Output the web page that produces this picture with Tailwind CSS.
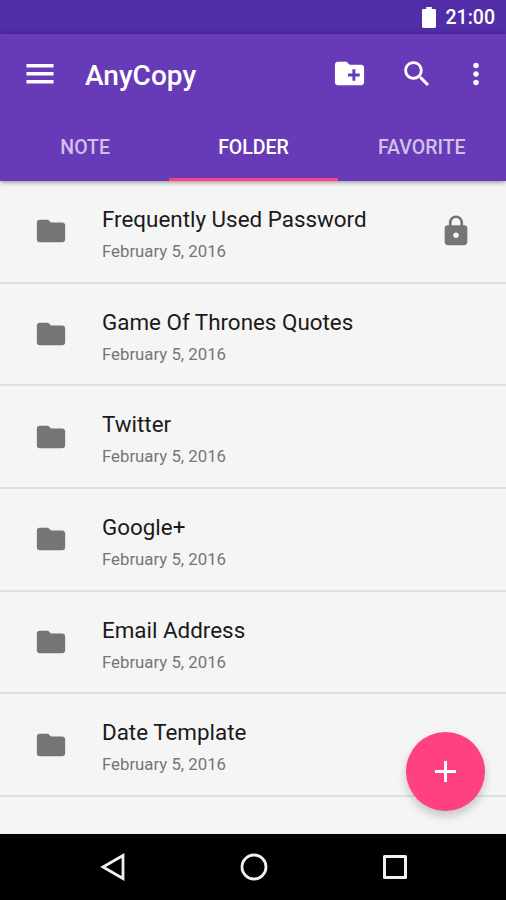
<!DOCTYPE html>
<html lang="en">
<head>
  <meta charset="UTF-8">
  <meta name="viewport" content="width=device-width, initial-scale=1.0">
  <title>AnyCopy</title>
  <script src="https://cdn.jsdelivr.net/npm/@tailwindcss/browser@4"></script>
</head>
<body class="bg-black font-['Roboto',sans-serif]">

  <div class="relative flex flex-col w-[506px] h-[900px] overflow-hidden bg-[#f5f5f5]">

    <!-- Status Bar -->
    <div class="h-[34px] shrink-0 bg-[#512da8] flex items-center justify-end pr-[11px] gap-[10px] text-white">
      <svg class="w-[14px] h-[21px]" viewBox="0 0 15 21" preserveAspectRatio="none" fill="currentColor"><path d="M4.5 0h6v2h3c.8 0 1.500.6 1.500 1.400v16.200c0 .8-.7 1.400-1.500 1.400h-12C.7 21 0 20.400 0 19.600V3.400C0 2.600.7 2 1.500 2h3z"/></svg>
      <span class="text-[19.500px] leading-none font-medium pt-[2px]">21:00</span>
    </div>

    <!-- Header -->
    <header class="relative z-10 h-[147px] shrink-0 bg-[#673ab7] text-white shadow-[0_1px_5px_rgba(0,0,0,0.45)]">
      <div class="flex items-center h-[79px] pl-[26px] pr-[13px]">
        <svg class="w-7 h-5" viewBox="0 0 28 20" fill="currentColor"><path d="M.5 0h27v3.500H.5zM.5 8h27v3.500H.5zM.5 16h27v3.500H.5z"/></svg>
        <h1 class="ml-[31px] mt-[5px] text-[28px] leading-none font-medium">AnyCopy</h1>
        <svg class="ml-auto w-[35px] h-[35px]" viewBox="0 0 24 24" fill="currentColor"><path d="M20 6h-8l-2-2H4c-1.110 0-1.990.89-1.990 2L2 18c0 1.110.89 2 2 2h16c1.110 0 2-.89 2-2V8c0-1.110-.89-2-2-2zm-1 8h-3v3h-2v-3h-3v-2h3V9h2v3h3v2z"/></svg>
        <svg class="ml-[33px] w-[34px] h-[34px]" viewBox="0 0 24 24" fill="currentColor"><path d="M15.500 14h-.79l-.28-.27C15.410 12.590 16 11.110 16 9.500 16 5.910 13.090 3 9.500 3S3 5.910 3 9.500 5.910 16 9.500 16c1.610 0 3.090-.59 4.230-1.570l.27.28v.79l5 4.990L20.490 19l-4.990-5zm-6 0C7.010 14 5 11.990 5 9.500S7.010 5 9.500 5 14 7.010 14 9.500 11.990 14 9.500 14z"/></svg>
        <svg class="ml-[25px] w-[34px] h-[34px]" viewBox="0 0 24 24" fill="currentColor"><path d="M12 8c1.100 0 2-.9 2-2s-.9-2-2-2-2 .9-2 2 .9 2 2 2zm0 2c-1.100 0-2 .9-2 2s.9 2 2 2 2-.9 2-2-.9-2-2-2zm0 6c-1.100 0-2 .9-2 2s.9 2 2 2 2-.9 2-2-.9-2-2-2z"/></svg>
      </div>

      <!-- Tabs -->
      <nav class="grid grid-cols-3 h-[68px] pl-px text-center text-[19.500px] leading-[69px] font-medium">
        <a class="h-[68px] text-white/70">NOTE</a>
        <a class="h-[68px] border-b-3 border-[#ff4081]">FOLDER</a>
        <a class="h-[68px] text-white/70">FAVORITE</a>
      </nav>
    </header>

    <!-- Folder List -->
    <ul id="folders" class="flex-1 min-h-0 overflow-hidden"></ul>

    <!-- Add Button -->
    <button class="absolute z-10 left-[405.500px] top-[731.500px] w-[79px] h-[79px] rounded-full bg-[#ff4081] text-white flex items-center justify-center shadow-[0_5px_10px_rgba(0,0,0,0.2)]">
      <svg class="w-[21px] h-[21px]" viewBox="0 0 21 21" fill="currentColor"><path d="M9 0h3v9h9v3h-9v9H9v-9H0V9h9z"/></svg>
    </button>

    <!-- Navigation Bar -->
    <div class="h-[66px] shrink-0 bg-black flex items-center justify-center gap-[113px] pl-px text-[#f0f0f0]">
      <svg class="w-7 h-7" viewBox="0 0 28 28" fill="none" stroke="currentColor" stroke-width="2.800"><path d="M24 2.500v23L4 14z"/></svg>
      <svg class="w-7 h-7" viewBox="0 0 28 28" fill="none" stroke="currentColor" stroke-width="2.800"><circle cx="14" cy="14" r="12"/></svg>
      <svg class="w-7 h-7" viewBox="0 0 28 28" fill="none" stroke="currentColor" stroke-width="3" stroke-linejoin="round"><path d="M3.500 3.500h21v21h-21z"/></svg>
    </div>
  </div>

  <script>
    const folders = [
      { name: "Frequently Used Password", locked: true },
      { name: "Game Of Thrones Quotes" },
      { name: "Twitter" },
      { name: "Google+" },
      { name: "Email Address" },
      { name: "Date Template" },
    ];

    const folderIcon = '<svg class="w-[34px] h-[34px] shrink-0" viewBox="0 0 24 24" fill="currentColor"><path d="M10 4H4c-1.100 0-1.990.9-1.990 2L2 18c0 1.100.9 2 2 2h16c1.100 0 2-.9 2-2V8c0-1.100-.9-2-2-2h-8l-2-2z"/></svg>';
    const lockIcon = '<svg class="w-[34px] h-[34px] ml-auto" viewBox="0 0 24 24" fill="currentColor"><path d="M18 8h-1V6c0-2.760-2.240-5-5-5S7 3.240 7 6v2H6c-1.100 0-2 .9-2 2v10c0 1.100.9 2 2 2h12c1.100 0 2-.9 2-2V10c0-1.100-.9-2-2-2zm-6 9c-1.100 0-2-.9-2-2s.9-2 2-2 2 .9 2 2-.9 2-2 2zm3.100-9H8.900V6c0-1.710 1.390-3.100 3.100-3.100 1.710 0 3.100 1.390 3.100 3.100v2z"/></svg>';

    document.getElementById("folders").innerHTML = folders.map(folder => `
      <li class="flex items-center h-[102.7px] pl-[34px] pr-[33px] border-b-2 border-[#dfdfdf] text-[#757575]">
        ${folderIcon}
        <div class="ml-[34px] pt-1">
          <div class="text-[22.4px] leading-[30px] text-[#1a1a1a]">${folder.name}</div>
          <div class="mt-[5px] text-[16.800px] leading-[24px]">February 5, 2016</div>
        </div>
        ${folder.locked ? lockIcon : ""}
      </li>`).join("");
  </script>

</body>
</html>
